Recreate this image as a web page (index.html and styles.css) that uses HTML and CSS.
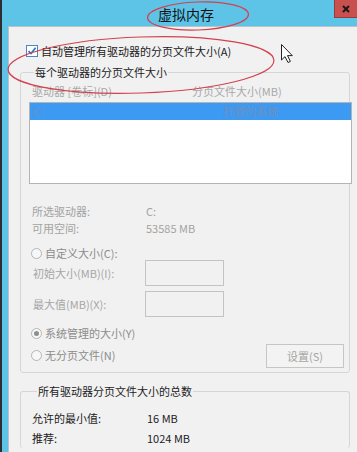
FILE: index.html
```html
<!DOCTYPE html>
<html lang="zh-CN">
<head>
<meta charset="utf-8">
<title>虚拟内存</title>
<link rel="stylesheet" href="styles.css">
</head>
<body>
<div class="screen">
  <div class="titlebar">
    <div class="title">虚拟内存</div>
    <div class="close-btn"><svg width="8" height="8" viewBox="0 0 8 8"><path d="M1 1 L7 7 M7 1 L1 7" stroke="#1a1a1a" stroke-width="2"/></svg></div>
  </div>
  <div class="client">
    <label class="check-row">
      <svg class="checkbox" width="12" height="12" viewBox="0 0 12 12"><rect x="0.5" y="0.5" width="11" height="11" fill="#fff" stroke="#4a86bf"/><path d="M2.5 6.2 L5 8.6 L9.6 2.8" fill="none" stroke="#2a74cc" stroke-width="1.7"/></svg>
      <span>自动管理所有驱动器的分页文件大小(A)</span>
    </label>

    <fieldset class="group group-drives">
      <legend>每个驱动器的分页文件大小</legend>
      <div class="list-head">
        <span class="col-drive">驱动器 [卷标](D)</span>
        <span class="col-size">分页文件大小(MB)</span>
      </div>
      <div class="listbox">
        <div class="list-row selected">
          <span class="col-drive">C:</span>
          <span class="col-managed">托管的系统</span>
        </div>
      </div>
      <div class="info-row"><span class="info-label">所选驱动器:</span><span>C:</span></div>
      <div class="info-row"><span class="info-label">可用空间:</span><span>53585 MB</span></div>

      <div class="radio-row first-radio">
        <span class="radio"></span><span>自定义大小(C):</span>
      </div>
      <div class="input-row">
        <span class="input-label">初始大小(MB)(I):</span><span class="textbox"></span>
      </div>
      <div class="input-row second-input">
        <span class="input-label">最大值(MB)(X):</span><span class="textbox"></span>
      </div>
      <div class="radio-row managed-radio">
        <span class="radio checked"></span><span>系统管理的大小(Y)</span>
      </div>
      <div class="last-row">
        <div class="radio-row"><span class="radio"></span><span>无分页文件(N)</span></div>
        <div class="button">设置(S)</div>
      </div>
    </fieldset>

    <fieldset class="group group-total">
      <legend>所有驱动器分页文件大小的总数</legend>
      <div class="total-row"><span class="total-label">允许的最小值:</span><span>16 MB</span></div>
      <div class="total-row"><span class="total-label">推荐:</span><span>1024 MB</span></div>
    </fieldset>
  </div>

  <svg class="marks" width="357" height="452" viewBox="0 0 357 452">
    <ellipse cx="198" cy="16" rx="50.5" ry="14" fill="none" stroke="#d4404e" stroke-width="1.2" transform="rotate(-2 198 16)"/>
    <ellipse cx="141" cy="65" rx="133" ry="28" fill="none" stroke="#d4404e" stroke-width="1.2" transform="rotate(-2 141 65)"/>
    <path d="M281.5 44.5 L281.5 60 L285 56.6 L288 62.5 L290.4 61.4 L287.5 55.6 L292.3 55.6 Z" fill="#fff" stroke="#222" stroke-width="1" stroke-linejoin="round"/>
  </svg>
</div>
</body>
</html>
```

FILE: styles.css
```css
html, body {
  margin: 0;
  padding: 0;
}

body {
  width: 357px;
  height: 452px;
  overflow: hidden;
  font-family: "Noto Sans CJK SC", "Microsoft YaHei", "Noto Sans", sans-serif;
  font-size: 11px;
  color: #1c1c1c;
}

.screen {
  position: relative;
  width: 355px;
  height: 452px;
  border-left: 2px solid #2b2f33;
  background: #5dc3e7;
  display: flex;
  flex-direction: column;
  overflow: hidden;
}

.titlebar {
  height: 26px;
  display: flex;
  align-items: flex-start;
  flex-shrink: 0;
}

.title {
  margin-left: 156px;
  margin-top: 5px;
  font-size: 14px;
  line-height: 18px;
  color: #111;
}

.close-btn {
  flex: 0 0 auto;
  margin-left: auto;
  width: 22px;
  height: 17px;
  background-color: #c8504f;
  border-left: 1px solid #9a3a3a;
  border-bottom: 1px solid #9a3a3a;
  display: flex;
  align-items: center;
  justify-content: center;
}

.client {
  flex: 1;
  margin-left: 6px;
  background: #f1f1f1;
  border-left: 1px solid #b9c4c9;
  border-top: 1px solid #b9c4c9;
  padding: 16px 0 0 11px;
  display: flex;
  flex-direction: column;
}

.check-row {
  display: flex;
  align-items: center;
  gap: 3px;
  margin-left: 6px;
  height: 16px;
  line-height: 16px;
  color: #1a1a1a;
}

.checkbox {
  flex-shrink: 0;
}

.group {
  margin: 5px 0 0 0;
  width: 330px;
  box-sizing: border-box;
  border: 1px solid #d6d6d6;
  border-radius: 3px;
  padding: 3px 0 4px 8px;
  min-width: 0;
}

.group legend {
  margin-left: 5px;
  padding: 0 1px;
  line-height: 16px;
  color: #1c1c1c;
}

.list-head {
  display: flex;
  height: 16px;
  line-height: 16px;
  padding-left: 3px;
  color: #a8a8a8;
}

.list-head .col-drive {
  width: 160px;
}

.listbox {
  margin: 3px -3px 0 0;
  height: 80px;
  background: #fff;
  border: 1px solid #b4b4b4;
}

.list-row {
  display: flex;
  height: 17px;
  line-height: 17px;
  padding-left: 3px;
}

.list-row.selected {
  background: #3c9af2;
  color: #6f8fbf;
}

.list-row .col-drive {
  width: 190px;
}

.info-row {
  display: flex;
  height: 17px;
  line-height: 17px;
  padding-left: 3px;
  color: #a3a3a3;
}

.listbox + .info-row {
  margin-top: 19px;
}

.info-label {
  width: 114px;
}

.radio-row {
  display: flex;
  align-items: center;
  gap: 3px;
  height: 14px;
  line-height: 14px;
  padding-left: 2px;
  color: #8c8c8c;
}

.first-radio {
  margin-top: 9px;
}

.radio {
  width: 9px;
  height: 9px;
  border: 1px solid #b5b5b5;
  border-radius: 50%;
  background: #f7f7f7;
  position: relative;
  flex-shrink: 0;
}

.radio.checked::after {
  content: "";
  position: absolute;
  left: 2px;
  top: 2px;
  width: 5px;
  height: 5px;
  border-radius: 50%;
  background: #8e8e8e;
}

.input-row {
  display: flex;
  align-items: center;
  height: 26px;
  padding-left: 4px;
  color: #a6a6a6;
}

.second-input {
  margin-top: 5px;
}

.input-label {
  width: 112px;
}

.textbox {
  width: 77px;
  height: 24px;
  border: 1px solid #c4c4c4;
  background: #f1f1f1;
}

.managed-radio {
  margin-top: 9px;
}

.last-row {
  display: flex;
  align-items: center;
  justify-content: space-between;
  height: 24px;
  margin-top: 4px;
  padding-right: 5px;
}

.last-row .radio-row {
  margin-top: -2px;
}

.button {
  width: 76px;
  height: 22px;
  border: 1px solid #c6c6c6;
  background: #f3f3f3;
  color: #a5a5a5;
  text-align: center;
  line-height: 22px;
}

.group-total {
  margin-top: 10px;
  padding: 9px 0 0 11px;
  border-bottom: none;
}

.total-row {
  display: flex;
  height: 20px;
  line-height: 20px;
  color: #1c1c1c;
}

.total-label {
  width: 115px;
}

.marks {
  position: absolute;
  left: -2px;
  top: 0;
  pointer-events: none;
}
```
